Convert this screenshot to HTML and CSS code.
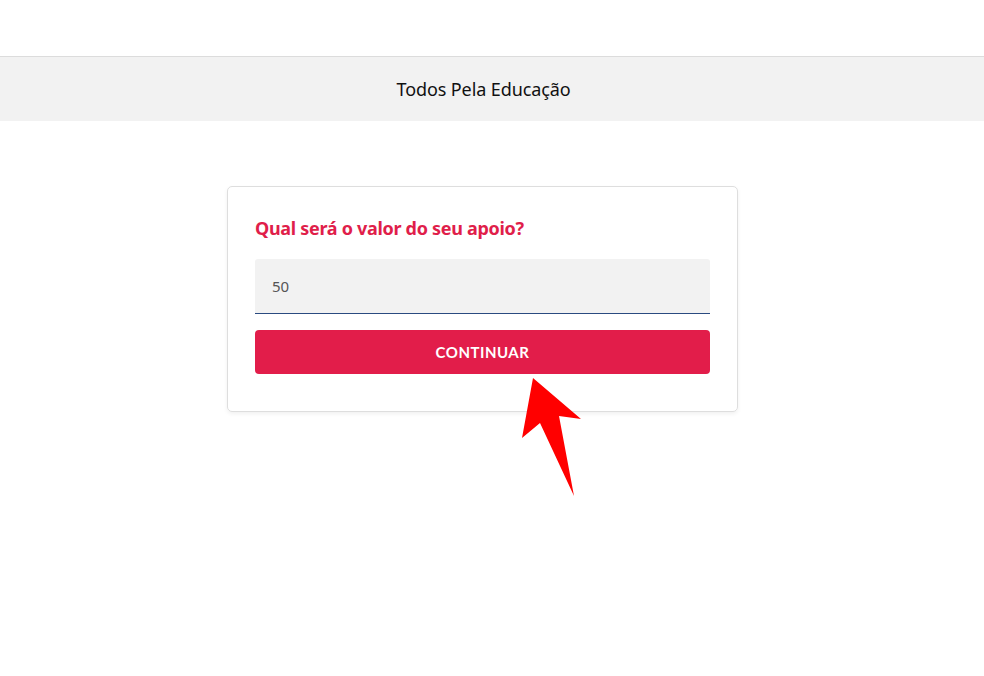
FILE: index.html
```html
<!DOCTYPE html>
<html lang="pt">
<head>
<meta charset="utf-8">
<title>Todos Pela Educação</title>
<link rel="stylesheet" href="styles.css">
</head>
<body>
<div class="topspace"></div>
<header class="bar"><span class="bar-title">Todos Pela Educação</span></header>
<main class="main">
  <section class="card">
    <h2 class="card-title">Qual será o valor do seu apoio?</h2>
    <div class="field"><span class="field-value">50</span></div>
    <button class="btn">CONTINUAR</button>
  </section>
</main>
<svg class="arrow" width="984" height="676" viewBox="0 0 984 676">
  <polygon points="533,378 581,419 559,416 574,496 540,423 522,438" fill="#ff0000"/>
</svg>
</body>
</html>
```
FILE: styles.css
```css
html, body {
  margin: 0;
  padding: 0;
  background: #fff;
  font-family: "Noto Sans", "Open Sans", sans-serif;
}
body {
  position: relative;
  width: 984px;
  height: 676px;
  overflow: hidden;
}
.topspace {
  height: 56px;
  border-bottom: 1px solid #dcdcdc;
}
.bar {
  height: 64px;
  background: #f2f2f2;
  display: flex;
  align-items: center;
  justify-content: center;
  padding-right: 17px;
}
.bar-title {
  font-size: 18px;
  color: #111;
  letter-spacing: -0.1px;
}
.main {
  padding-top: 65px;
  padding-right: 19px;
  display: flex;
  justify-content: center;
}
.card {
  width: 455px;
  padding: 28px 27px 37px;
  border: 1px solid #dedede;
  border-radius: 5px;
  box-shadow: 0 2px 4px rgba(0,0,0,0.06);
}
.card-title {
  margin: 0 0 18px 0;
  font-size: 18px;
  font-weight: 700;
  color: #e01e4a;
  line-height: 26px;
  letter-spacing: -0.3px;
}
.field {
  height: 54px;
  background: #f2f2f2;
  border-bottom: 1px solid #2a4a80;
  border-radius: 3px 3px 0 0;
  display: flex;
  align-items: center;
  padding-left: 17px;
}
.field-value {
  font-size: 15px;
  color: #555;
}
.btn {
  display: block;
  width: 100%;
  height: 44px;
  margin-top: 16px;
  border: none;
  border-radius: 4px;
  background: #e21d4a;
  color: #fff;
  font-family: Lato, "Noto Sans", sans-serif;
  font-weight: 700;
  font-size: 15px;
  letter-spacing: 0.5px;
}
.arrow {
  position: absolute;
  left: 0;
  top: 0;
  pointer-events: none;
}
```
